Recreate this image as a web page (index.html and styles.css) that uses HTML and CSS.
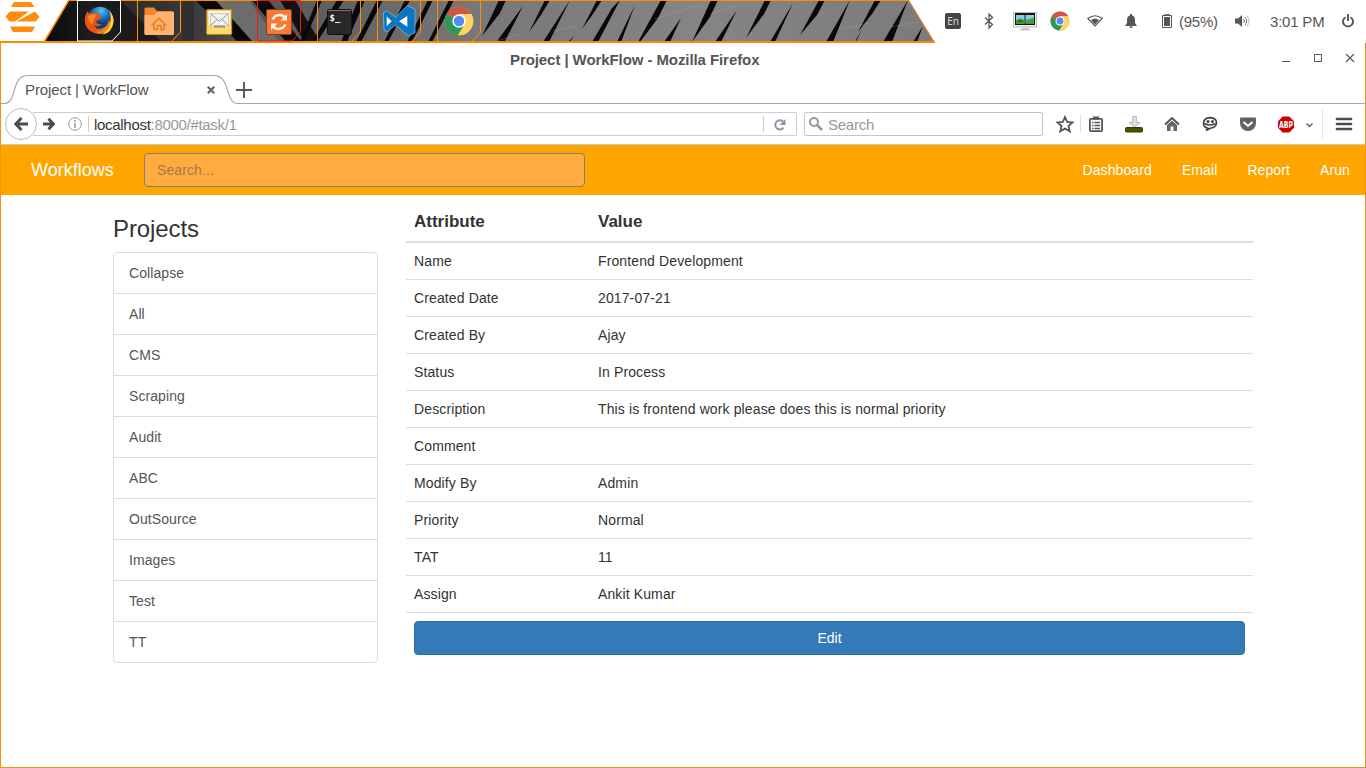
FILE: index.html
```html
<!DOCTYPE html>
<html lang="en">
<head>
<meta charset="utf-8">
<title>Project | WorkFlow</title>
<link rel="stylesheet" href="styles.css">
</head>
<body>
<div class="desktop">
  <header class="panel">
    <div class="dock">
      <svg class="dock-bg" width="936" height="43" viewBox="0 0 936 43">
        <defs>
          <linearGradient id="metal" x1="0" x2="936" y1="0" y2="0" gradientUnits="userSpaceOnUse">
            <stop offset="0.05" stop-color="#090909"/><stop offset="0.12" stop-color="#292929"/><stop offset="0.2" stop-color="#383838"/><stop offset="0.26" stop-color="#505050"/><stop offset="0.33" stop-color="#5d5d5d"/><stop offset="0.5" stop-color="#777"/><stop offset="0.75" stop-color="#858585"/><stop offset="1" stop-color="#7b7b7b"/>
          </linearGradient>
          <clipPath id="dockclip"><path d="M69 0H909L935 43H44z"/></clipPath>
        </defs>
        <path d="M69 0H909L935 43H44z" fill="url(#metal)"/>
        <g clip-path="url(#dockclip)">
          <path d="M78 0h42l42 42H95z" fill="#1b1b1b"/>
          <path d="M182 0h12v42h-12z" fill="#303030"/>
          <path d="M195 0h20l38 42h-15z" fill="#080808"/>
          <path d="M216 0h33l30 42h-26z" fill="#6c6c6c"/>
          <path d="M252 0h16l34 42h-16z" fill="#0b0b0b"/>
          <path d="M280 0h15l25 42h-16z" fill="#111"/>
          <g fill="#080808">
            <path d="M317 0h5l-18 42h-4zM337 0h7l-27 42h-5zM358 0h7l-18 42h-6zM377 0h6l-22 42h-5zM405 0h5l-22 42h-4zM428 0h5l-21 42h-5zM449 0h5l-22 42h-4z"/>
            <path d="M499 0h7l-6 13l-18 23zM523 6l-18 35h-8zM545 0h5l-9 15l-12 17zM570 0l-21 42h-6zM597 0h5l-9 14l-11 15zM620 0l-22 42h-6l20-34zM574 36l-4 6h-2zM635 5l-14 37h-4zM661 0h6l-9 18l-18 24h-2zM681 18l-11 24h-6zM711 0h7l-8 17l-18 25zM737 10l-16 32h-6zM765 0h6l-7 14l-18 24zM793 3l-18 39h-5zM819 0h6l-8 15l-17 20zM850 0l-17 42h-7zM857 40l5-11l-7 13zM875 0h6l-9 14l-14 18zM908 0l-16 42h-9z"/><path d="M923 26l-6 16h-4z"/>
          </g>
          <g stroke="#aaa" stroke-width=".6" opacity=".5" fill="none">
            <path d="M493 42l27-8M553 31l24-5M655 19l44-14M710 14l28-9M842 29l28-6M890 27l29-5"/>
          </g>
        </g>
        <path d="M69 .5H908.500L934 41.500" fill="none" stroke="#ff8c0a"/>
        <path d="M69 0L44 42" stroke="#ff8c0a" stroke-width="1.500"/>
        <path d="M0 42H935" stroke="#ff8800" stroke-width="2"/>
        <g fill="none" stroke="#ff8c0a">
          <path d="M137.500 0V41M180.500 0V32L172 41M317.500 0V41M360.500 0V32L352 41M377.500 0V41M420.500 0V32L412 41M437.500 0V41M480.500 0V32L472 41"/>
          <path d="M257.500 41V.5H300.500V32L292 41z" stroke="#f21c0e"/>
          <path d="M77.500 41V.5H120.500V32L112 41z" stroke="#fff"/>
        </g>
      </svg>
      <svg class="zorin" width="35" height="30" viewBox="0 0 35 30" fill="#ff8c0a"><path d="M9 0H26L29.500 5H6zM5 9.500H24L10 19.500H4.500L.5 14.500zM30 9.500L34.500 15L30.500 19.500H11.500zM5 24.500H30L27 30H8z"/></svg>
      <div class="apps">
        <svg viewBox="0 0 30 30">
          <defs><linearGradient id="fox" x2="1" y2="1"><stop stop-color="#e75717"/><stop offset=".6" stop-color="#e65312"/><stop offset="1" stop-color="#ffc52a"/></linearGradient><radialGradient id="globe" cx=".55" cy=".15"><stop stop-color="#55c1ed"/><stop offset=".7" stop-color="#126ab0"/><stop offset="1" stop-color="#173c76"/></radialGradient></defs>
          <circle cx="16" cy="13.500" r="12.800" fill="url(#globe)"/>
          <path d="M25 4Q30 10 29.500 16A14.500 14 0 0 1 1 17Q0 10 4 5L5 8Q8 6 12 7L15 6L14 9L18 11Q17 13 12 15Q13 19 18 18Q14 22 10 19Q13 25 19 22Q24 20 24 14Q26 15 26 17Q28 10 25 4z" fill="url(#fox)"/>
          <path d="M25 4Q30 10 29.500 16Q28 27 18 29Q26 23 26 17Q28 10 25 4z" fill="#ffd23e"/>
          <path d="M4 10Q8 7 13 9Q9 13 9 18Q4 17 4 10z" fill="#f5871f"/>
        </svg>
        <svg viewBox="0 0 30 30"><path d="M.5 3Q.5 1.500 2 1.500H10L13 5H28Q30 5 30 7V28H.5z" fill="#f2852d"/><path d="M.5 9H10L13 6H30V27.500Q30 29 28.500 29H2Q.5 29 .5 27.500z" fill="#ffb272"/><path d="M8.500 18.500L15 12.500L21.500 18.500H20V23.500H17V19.500H13.500V23.500H10V18.500z" fill="none" stroke="#ed7b12" stroke-width="1.500"/></svg>
        <svg viewBox="0 0 30 30"><rect x="2.700" y="3.500" width="25" height="25" rx="1" fill="#f9ce62" stroke="#ba8012"/><path d="M4.500 5H26V19H4.500z" fill="#fff9e9"/><path d="M6.500 7.500H24.500V20H6.500z" fill="#f1f1f1" stroke="#c8c8c8"/><path d="M6.500 7.500L15.500 15.500L24.500 7.500M6.500 19.500L13 13.500M24.500 19.500L18 13.500" fill="none" stroke="#999"/><path d="M3.200 20H10V22H21V20H27.200V28H3.200z" fill="#ffd86c"/><path d="M10 19.500H21V21.500H10z" fill="#919191"/></svg>
        <svg viewBox="0 0 30 30"><rect x="2.500" y="3.500" width="25" height="25" rx="1.500" fill="#f67a35" stroke="#8f3c1a"/><path d="M8.500 13.500Q11 9 15.500 9Q19 9 21 11.500M21.500 18.500Q19 23 14.500 23Q11 23 9 20.500" fill="none" stroke="#fff3e9" stroke-width="2.500"/><path d="M23 8V14.500H16.500zM7 24V17.500H13.500z" fill="#fff3e9"/></svg>
        <svg viewBox="0 0 30 30"><rect x="3.500" y="3.500" width="24" height="25" rx="1.500" fill="#282828" stroke="#111"/><path d="M4 4.500H27" stroke="#777"/><text class="prompt" x="5.500" y="15">$_</text></svg>
        <svg viewBox="0 0 34 34"><path d="M1.300 8.700L5.300 7L13.700 13.300L25.300 1.700L33 5.300V28.700L26.300 32L13.700 21L5.300 27.700L2 26z" fill="#0876c3" stroke="#9cbdd6" stroke-width=".7"/><path d="M4.700 12.500V22L9.700 17.300zM25.300 12L17 17.300L25.300 22.700z" fill="#fff"/></svg>
        <svg viewBox="0 0 30 30"><use href="#chrome-mark"/></svg>
      </div>
    </div>
    <div class="tray">
      <span class="lang">En</span>
      <svg class="ico bt" width="12" height="16" viewBox="0 0 12 16"><path d="M2 4.500L9.500 11.500L6 15V1L9.500 4.500L2 11.500" fill="none" stroke="#555" stroke-width="1.300"/></svg>
      <svg class="ico screen" width="24" height="20" viewBox="0 0 24 20"><path d="M.5 1.500h23v14.500H.5z" fill="#eee" stroke="#bbb"/><path d="M2 2h20v12H2z" fill="#171717"/><path d="M3 4h8.500v8.500H3zM12.500 4H21v8.500h-8.500z" fill="#8cc9f0"/><path d="M3 9q4-3 8.500 0v3.500H3zM12.500 9q4-1 8.500-2v5.500h-8.500z" fill="#3da629"/><path d="M4.500 11q3-3.500 6 0z" fill="#185d15"/><path d="M9 17h6l3 2.500H6z" fill="#c8c8c8"/></svg>
      <svg class="ico chrome" width="20" height="20" viewBox="0 0 30 30"><g id="chrome-mark"><circle cx="15" cy="15" r="14.300" fill="#e9b52c"/><path d="M15 15L2.600 7.800A14.300 14.300 0 0 1 27.400 8H15z" fill="#cf5547"/><path d="M15 15L2.600 7.800A14.300 14.300 0 0 0 14 29.300L20.500 18z" fill="#30975a"/><path d="M15 8H27.400A14.300 14.300 0 0 1 14 29.300L21 18z" fill="#fdd565"/><circle cx="15" cy="15" r="6.700" fill="#fff"/><circle cx="15" cy="15" r="5.200" fill="#4e8df5"/></g></svg>
      <svg class="ico wifi" width="16" height="12" viewBox="0 0 16 12"><path d="M.8 3.500Q8-2 15.200 3.500L8 11z" fill="none" stroke="#555" stroke-width="1.200"/><path d="M4 5Q8 2 12 5L8 9.500z" fill="#555"/></svg>
      <svg class="ico bell" width="12" height="14" viewBox="0 0 12 14"><path d="M5 0h2v1.500Q10 2 10 6V9L12 12H0L2 9V6Q2 2 5 1.500zM4 12.500H8L7 14H5z" fill="#555"/></svg>
      <svg class="ico battery" width="10" height="14" viewBox="0 0 10 14"><path d="M3 0h4v1H3zM.5 1.500h9v12h-9z" fill="none" stroke="#555"/><path d="M2 3h6v9H2z" fill="#555"/></svg>
      <span class="percent">(95%)</span>
      <svg class="ico sound" width="15" height="12" viewBox="0 0 15 12"><path d="M0 3.500h3L7 0v12L3 8.500H0z" fill="#555"/><path d="M8.500 4q2 2 0 4M10 2q3.500 4 0 8" fill="none" stroke="#777"/><path d="M12 .5q4 5.500 0 11" fill="none" stroke="#bbb"/></svg>
      <span class="clock">3:01 PM</span>
      <svg class="ico power" width="12" height="14" viewBox="0 0 12 14"><path d="M3.500 3.200A5 5 0 1 0 8.500 3.200M6 0V7" fill="none" stroke="#555" stroke-width="1.900"/></svg>
    </div>
  </header>

  <main class="window">
    <div class="titlebar">
      <div class="window-title">Project | WorkFlow - Mozilla Firefox</div>
      <svg class="window-controls" width="74" height="10" viewBox="0 0 74 10" fill="none" stroke="#555"><path d="M0 7.500H8M32.500 .5h7v7h-7z"/><path d="M64 0L72 8M72 0L64 8" stroke-width="1.200"/></svg>
    </div>
    <div class="tabs">
      <svg class="tab-shape" width="1365" height="30" viewBox="0 0 1365 30"><path d="M0 28.500H3C17 28.500 9 .5 27 .5H212C231 .5 223 28.500 237 28.500H1365" fill="none" stroke="#a4a7ac" stroke-width="1.200"/></svg>
      <span class="tab-name">Project | WorkFlow</span>
      <svg class="tab-close" width="8" height="8" viewBox="0 0 8 8"><path d="M.7 .7L7.300 7.300M7.300 .7L.7 7.300" stroke="#666" stroke-width="2.200"/></svg>
      <svg class="tab-new" width="16" height="16" viewBox="0 0 16 16"><path d="M0 8H16M8 0V16" stroke="#555" stroke-width="1.900"/></svg>
    </div>
    <div class="toolbar">
      <div class="back"><svg width="14" height="14" viewBox="0 0 14 14"><path d="M7.500 1L1.800 7L7.500 13M2 7H14" fill="none" stroke="#4c4c4c" stroke-width="3"/></svg></div>
      <div class="address">
        <svg class="forward" width="12" height="12" viewBox="0 0 12 12"><path d="M5.500 .8L10.500 6L5.500 11.200M10 6H0" fill="none" stroke="#4c4c4c" stroke-width="3"/></svg>
        <svg class="info" width="14" height="14" viewBox="0 0 14 14"><circle cx="7" cy="7" r="6.300" fill="none" stroke="#999"/><path d="M7 3V5M7 6V11" stroke="#888" stroke-width="1.300"/></svg>
        <span class="url">localhost<span>:8000/#task/1</span></span>
        <span class="reload"><svg width="12" height="12" viewBox="0 0 12 12"><path d="M9.500 8.700A4.600 4.600 0 1 1 9 2.500" fill="none" stroke="#8b97a5" stroke-width="2"/><path d="M11.500 0V6H5.500z" fill="#8b97a5"/></svg></span>
      </div>
      <div class="find"><svg width="14" height="14" viewBox="0 0 14 14" fill="none" stroke="#999"><circle cx="5" cy="5" r="4" stroke-width="2"/><path d="M8 8L13 13" stroke-width="2.500"/></svg><span>Search</span></div>
      <svg class="tools" width="308" height="36" viewBox="0 0 308 36">
        <path d="M14 8L16.200 13L21.500 13.500L17.500 17L18.700 22.300L14 19.500L9.300 22.300L10.500 17L6.500 13.500L11.800 13z" fill="none" stroke="#555" stroke-width="1.800"/>
        <path d="M29.500 6V23" stroke="#ddd"/>
        <rect x="38.900" y="9.900" width="12.200" height="12.200" rx="1" fill="none" stroke="#555" stroke-width="1.800"/><path d="M42 7.500h6v3h-6z" fill="#555"/><path d="M41 13.500h1.500M43.500 13.500h5.500M41 16.500h1.500M43.500 16.500h5.500M41 19.500h1.500M43.500 19.500h5.500" stroke="#555" stroke-width="1.300"/>
        <path d="M81.500 7.500h4v6h3.500l-5.500 5l-5.500-5h3.500z" fill="#ddd" stroke="#b7bcbc"/><rect x="74.500" y="18.500" width="17" height="4.500" rx="1" fill="#4c5300" stroke="#363b03"/>
        <path d="M114 15.500L121 9L128 15.500" fill="none" stroke="#555" stroke-width="2"/><path d="M116 16L121 11.500L126 16V22H122.500V17.500H119.500V22H116z" fill="#666"/>
        <path d="M157.500 19.500Q152.500 18.500 152.500 14Q153 9 159 8.700Q165.500 9 165.500 14Q165 18.500 160 19L155 21.500z" fill="none" stroke="#444" stroke-width="1.700"/><circle cx="157" cy="12.500" r="1.500" fill="#444"/><circle cx="161.500" cy="12.500" r="1.500" fill="#444"/><path d="M153.500 14.500Q159 17.500 164.500 14.500" fill="none" stroke="#444" stroke-width="1.500"/>
        <path d="M190 8.500h14q1 0 1 1V14a8 8 0 0 1-16 0V9.500q0-1 1-1z" fill="#616166"/><path d="M192.500 13L197 17L201.500 13" fill="none" stroke="#fff" stroke-width="2"/>
        <path d="M231.700 7.500h6.600l4.700 4.700v6.600l-4.700 4.700h-6.600l-4.700-4.700v-6.600z" fill="#cb0000"/><text class="abp" x="228" y="18.500" textLength="14" lengthAdjust="spacingAndGlyphs">ABP</text>
        <path d="M255.500 14.500L258.500 17.500L261.500 14.500" fill="none" stroke="#666" stroke-width="1.500"/><path d="M271.500 0V30" stroke="#e3e3e3"/>
        <path d="M286 10H300M286 15H300M286 20H300" stroke="#4c4c4c" stroke-width="2.700" stroke-linecap="round"/>
      </svg>
    </div>

    <nav class="navbar">
      <a class="brand">Workflows</a>
      <input class="search" placeholder="Search...">
      <div class="nav-links"><a>Dashboard</a><a>Email</a><a>Report</a><a>Arun</a></div>
    </nav>
    <div class="content">
      <aside class="sidebar">
        <h3>Projects</h3>
        <ul class="list"><li>Collapse</li><li>All</li><li>CMS</li><li>Scraping</li><li>Audit</li><li>ABC</li><li>OutSource</li><li>Images</li><li>Test</li><li>TT</li></ul>
      </aside>
      <section class="details">
        <table>
          <thead><tr><th class="attribute">Attribute</th><th>Value</th></tr></thead>
          <tbody>
            <tr><td>Name</td><td>Frontend Development</td></tr>
            <tr><td>Created Date</td><td>2017-07-21</td></tr>
            <tr><td>Created By</td><td>Ajay</td></tr>
            <tr><td>Status</td><td>In Process</td></tr>
            <tr><td>Description</td><td>This is frontend work please does this is normal priority</td></tr>
            <tr><td>Comment</td><td></td></tr>
            <tr><td>Modify By</td><td>Admin</td></tr>
            <tr><td>Priority</td><td>Normal</td></tr>
            <tr><td>TAT</td><td>11</td></tr>
            <tr><td>Assign</td><td>Ankit Kumar</td></tr>
            <tr><td colspan="2"><button>Edit</button></td></tr>
          </tbody>
        </table>
      </section>
    </div>
  </main>
</div>
</body>
</html>
```
FILE: styles.css
```css
* { box-sizing: border-box; }
body { margin: 0; overflow: hidden; background: #fff; font: 14px/20px "Liberation Sans", Arial, sans-serif; color: #333; }
svg { display: block; flex: none; }
.desktop { width: 1366px; height: 768px; display: flex; flex-direction: column; }

.panel { height: 43px; display: flex; }
.dock { position: relative; width: 936px; height: 43px; }
.dock-bg { position: absolute; inset: 0; }
.zorin { position: absolute; left: 5px; top: 2px; }
.apps { position: absolute; left: 84px; top: 6px; display: flex; align-items: center; gap: 30px; height: 30px; }
.apps svg { width: 30px; height: 30px; overflow: visible; }
.apps svg:nth-child(6) { width: 34px; height: 34px; margin: 0 -2px; }
.prompt { font: bold 9px "DejaVu Sans Mono", monospace; fill: #fff; }
.tray { flex: 1; display: flex; align-items: center; padding: 0 0 1px 9px; color: #555; font-size: 15px; white-space: nowrap; }
.lang { width: 16px; height: 16px; border-radius: 2px; background: #444; color: #ddd; font: 10px/17px "Noto Sans", sans-serif; text-align: center; }
.bt { margin-left: 22px; }
.screen { margin-left: 18px; }
.chrome { margin-left: 13px; }
.wifi { margin-left: 17px; }
.bell { margin-left: 22px; }
.battery { margin-left: 25px; }
.percent { margin-left: 7px; width: 40px; padding-top: 2px; letter-spacing: -.25px; }
.sound { margin-left: 16px; }
.clock { margin-left: 20px; width: 56px; padding-top: 2px; letter-spacing: -.2px; }
.power { margin-left: 16px; }

.window { flex: 1; border-left: 1px solid #ff8c0a; border-right: 1px solid #f09020; border-bottom: 1px solid #f09020; }
.titlebar { height: 32px; display: flex; padding: 7px 9px 0 509px; justify-content: space-between; }
.window-title { font-size: 15px; font-weight: bold; color: #555; white-space: nowrap; letter-spacing: -.08px; }
.window-controls { margin-top: 4px; }
.tabs { position: relative; height: 30px; display: flex; padding-left: 24px; }
.tab-shape { position: absolute; left: 0; top: 0; }
.tab-name { width: 182px; padding-top: 5px; font-size: 15px; color: #555; white-space: nowrap; letter-spacing: -.1px; }
.tab-close { margin-top: 11px; }
.tab-new { margin: 7px 0 0 21px; }
.toolbar { height: 40px; display: flex; padding: 3px 0 0 4px; border-bottom: 1px solid #c8c8c8; font-size: 15px; }
.back { flex: none; width: 32px; height: 32px; border: 1px solid #bbb; border-radius: 50%; background: #fff; display: flex; align-items: center; justify-content: center; z-index: 1; }
.address { flex: none; width: 764px; height: 24px; margin: 4px 0 0 -4px; border: 1px solid #ccc; border-left: 0; border-radius: 0 2px 2px 0; display: flex; align-items: center; }
.forward { margin-left: 10px; }
.info { margin-left: 13px; }
.url { margin-left: 6px; border-left: 1px solid #ccc; padding: 1px 0 0 5px; line-height: 15px; color: #333; letter-spacing: -.3px; }
.url span { color: #999; }
.reload { margin-left: auto; width: 33px; border-left: 1px solid #ccc; height: 16px; padding: 3px 0 0 10px; }
.find { flex: none; width: 239px; height: 24px; margin: 4px 0 0 7px; border: 1px solid #c4c4c4; border-radius: 2px; display: flex; align-items: center; padding-left: 4px; gap: 5px; color: #999; letter-spacing: -.25px; }
.find span { padding-top: 1px; }
.tools { margin: 1px 0 0 8px; }
.abp { font: bold 8px "DejaVu Sans", sans-serif; fill: #fff; }

.navbar { height: 50px; background: #ffa500; display: flex; align-items: center; padding: 0 15px 0 30px; color: #fff; }
.brand { width: 113px; font-size: 18px; }
.search { width: 441px; height: 34px; border: 1px solid #808080; border-radius: 4px; background: #ffab40; padding: 6px 12px; font: 14px "Liberation Sans", sans-serif; letter-spacing: .1px; }
.search::placeholder { color: #a67c48; opacity: 1; }
.nav-links { margin-left: auto; display: flex; gap: 30px; letter-spacing: .1px; }
.content { display: flex; padding: 7px 112px 0; gap: 28px; }
.sidebar { width: 265px; }
h3 { margin: 13px 0 10px; font-size: 24px; line-height: 27px; font-weight: normal; letter-spacing: -.1px; }
.list { margin: 0; padding: 0; list-style: none; color: #555; letter-spacing: .08px; }
.list li { height: 42px; padding: 10px 15px; border: 1px solid #ddd; margin-bottom: -1px; }
.list li:first-child { border-radius: 4px 4px 0 0; }
.list li:last-child { border-radius: 0 0 4px 4px; }
.details { width: 847px; }
table { width: 100%; border-collapse: collapse; table-layout: fixed; }
th { text-align: left; font-size: 17px; line-height: 24px; padding: 8px 8px 7px; border-bottom: 2px solid #ddd; }
.attribute { width: 184px; }
td { height: 37px; padding: 8px; border-top: 1px solid #ddd; letter-spacing: .12px; }
tbody tr:first-child td { border-top: 0; }
button { display: block; width: 100%; height: 34px; border: 1px solid #2e6da4; border-radius: 4px; background: #337ab7; color: #fff; font: 14px/20px "Liberation Sans", sans-serif; }
```
